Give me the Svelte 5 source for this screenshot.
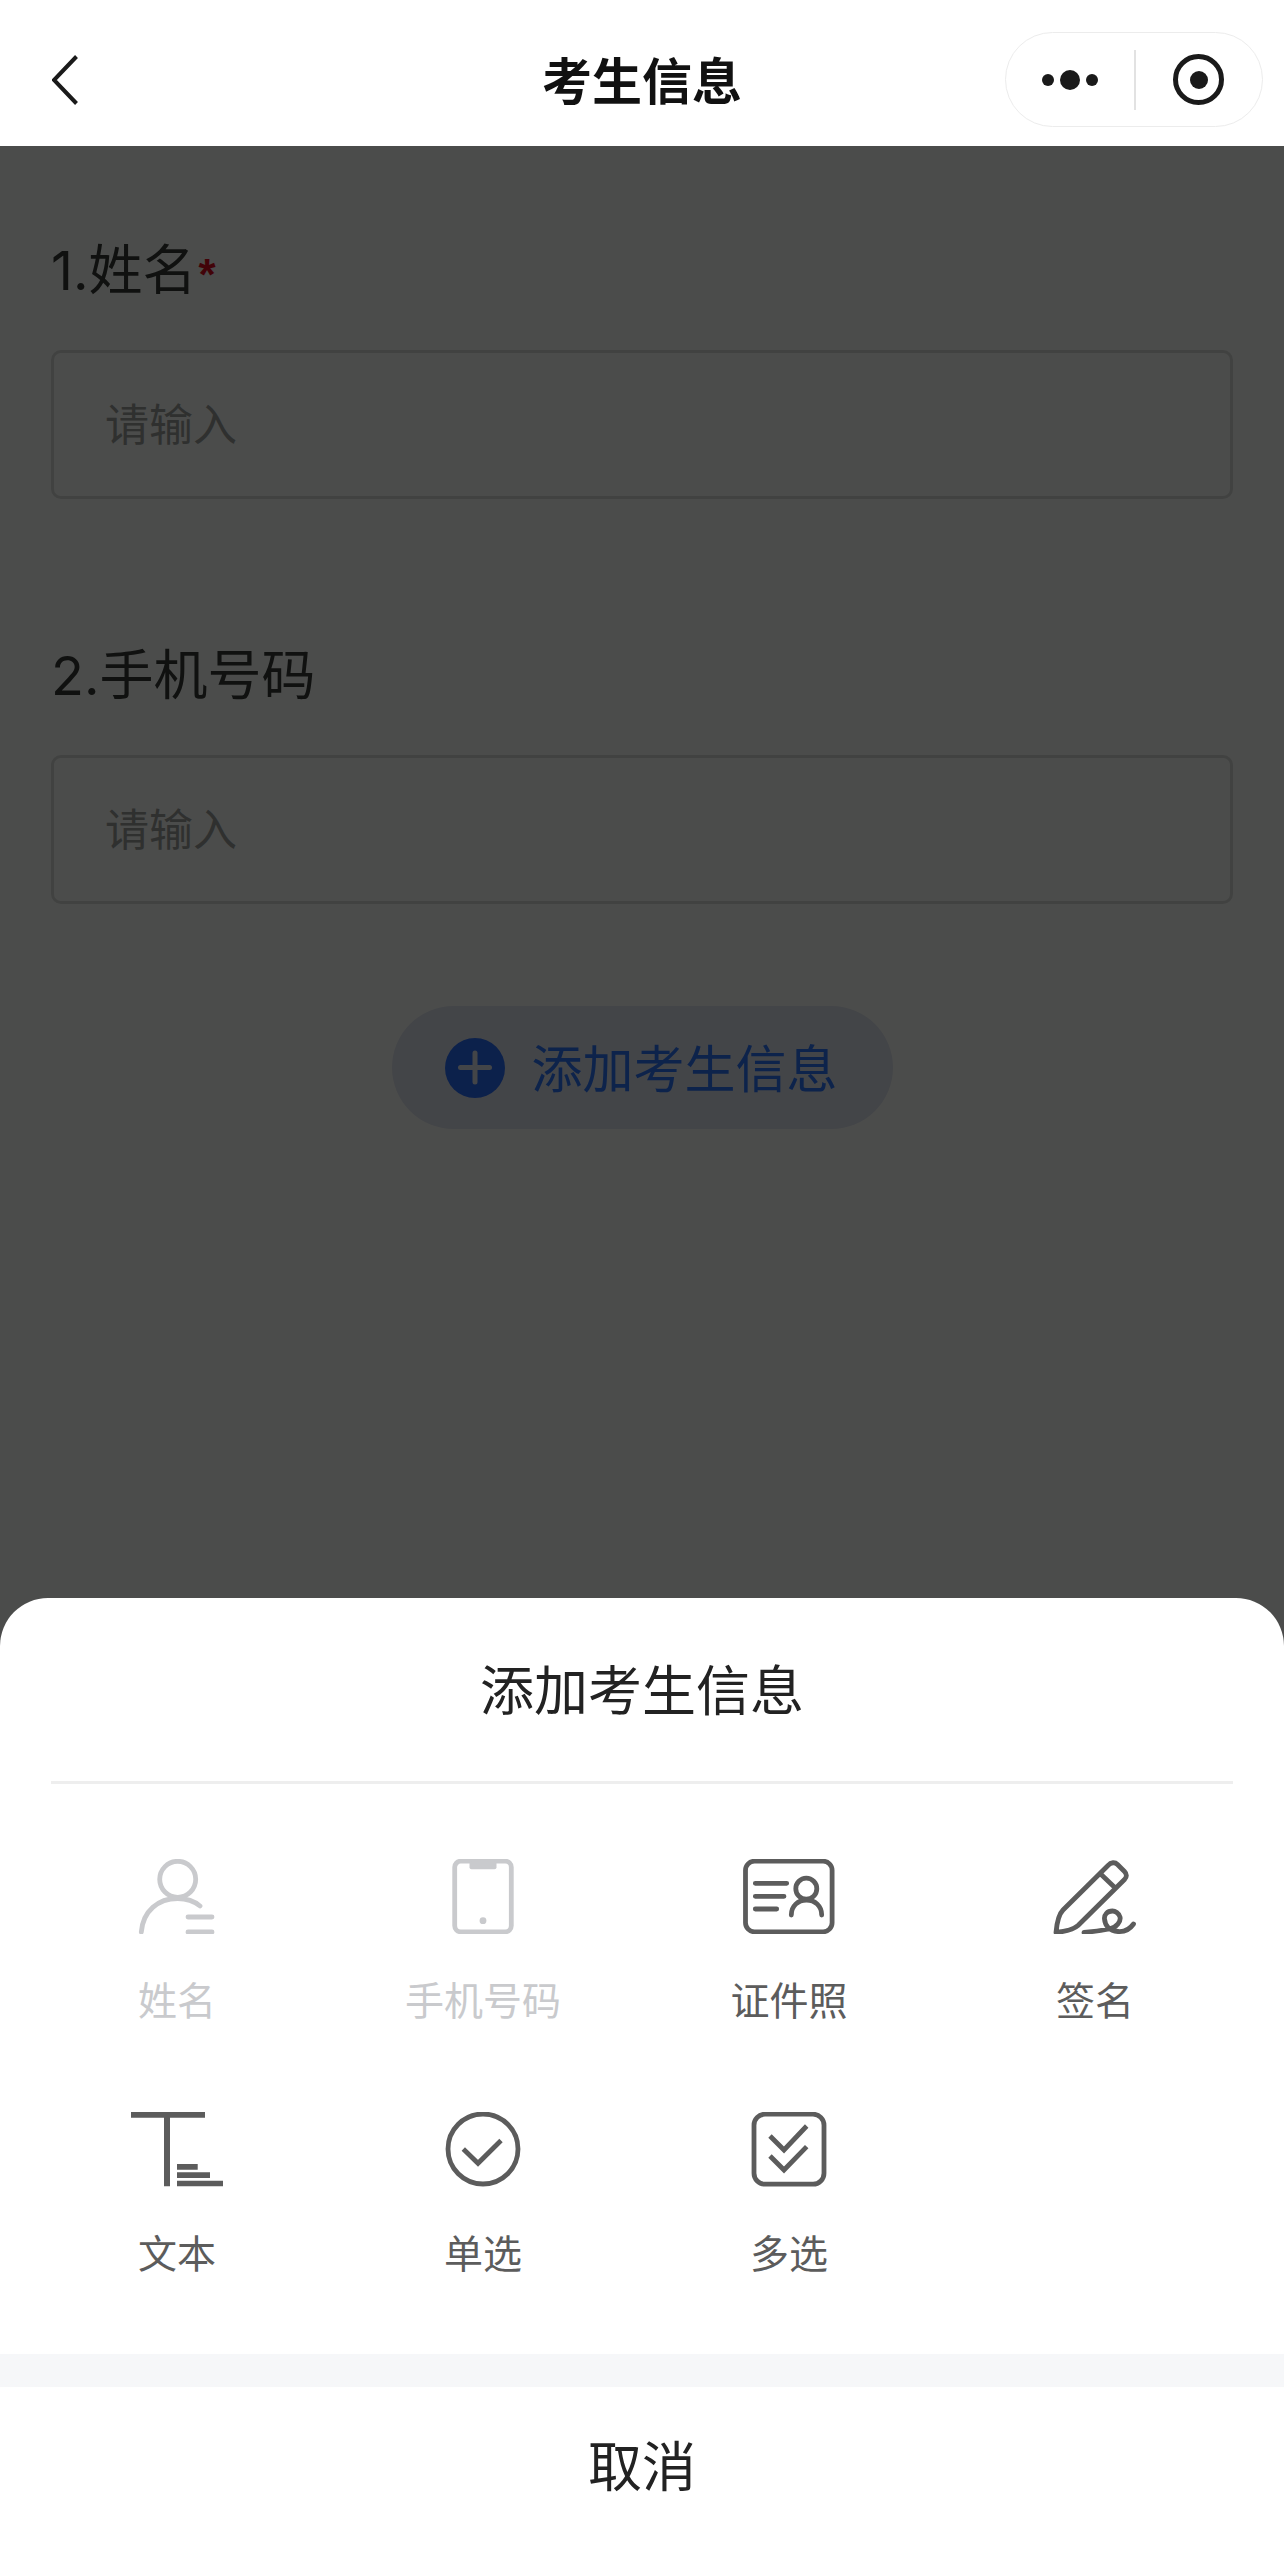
<script lang="ts">
  type Option = { id: string; label: string; disabled?: boolean };

  const fields = [
    { id: 'name', label: '1.姓名', required: true },
    { id: 'phone', label: '2.手机号码', required: false },
  ];

  const options: Option[] = [
    { id: 'name', label: '姓名', disabled: true },
    { id: 'phone', label: '手机号码', disabled: true },
    { id: 'idphoto', label: '证件照' },
    { id: 'sign', label: '签名' },
    { id: 'text', label: '文本' },
    { id: 'radio', label: '单选' },
    { id: 'check', label: '多选' },
  ];
</script>

<div class="page">
  <header class="nav">
    <button class="back" aria-label="返回">
      <svg width="26" height="50" viewBox="0 0 26 50"><path d="M24.5 1.5 2 25l22.5 23.500" /></svg>
    </button>
    <h1>考生信息</h1>
    <div class="capsule">
      <div class="more">
        <i class="dot"></i><i class="dot big"></i><i class="dot"></i>
      </div>
      <span class="sep"></span>
      <div class="target"><i></i></div>
    </div>
  </header>

  <main class="form">
    {#each fields as f}
      <section class="field">
        <div class="label">{f.label}{#if f.required}<span class="req">*</span>{/if}</div>
        <div class="input">请输入</div>
      </section>
    {/each}
    <button class="add">
      <span class="plus"></span>
      <span class="add-text">添加考生信息</span>
    </button>
  </main>

  <div class="mask"></div>

  <div class="sheet">
    <div class="sheet-title">添加考生信息</div>
    <div class="rule"></div>
    <div class="grid">
      {#each options as o}
        <div class="opt" class:disabled={o.disabled}>
          <svg class="ico" width="92" height="75" viewBox="0 0 92 75">
            {#if o.id === 'name'}
              <circle cx="46.700" cy="20.300" r="18" />
              <path d="M10.300 73C12 52 27 39.500 46.700 39.500c8.300 0 16.300 2.500 22.300 7.500M57 58h24M57 73h24" />
            {:else if o.id === 'phone'}
              <rect x="17.700" y="2.200" width="56.600" height="70.600" rx="6" />
              <rect class="fill" x="32.500" y="2" width="27" height="8.300" rx="2" />
              <circle class="fill" cx="46" cy="61.700" r="3.400" />
            {:else if o.id === 'idphoto'}
              <rect x="2.500" y="2.200" width="86.600" height="70.600" rx="9" />
              <path d="M12.300 24.300h31.400M12.300 37.300H41M12.300 50h21.400" />
              <circle cx="63.300" cy="29.700" r="10.500" />
              <path d="M48.300 56c0-9 6.700-15 15.200-15s15.200 6 15.200 15" />
            {:else if o.id === 'sign'}
              <path d="M7 73.500C8 62 10 55 14 51L59 6.500c3-3.500 7-3.500 9.500-1l7 7c2.500 2.500 2.500 5.500 0 8L29 66.500C24 71 16 72.500 7 73.500ZM52.700 16 65 27.700" />
              <path d="M35 73.500c10-1 17-2 25-3.500 8-1.500 12-8 11-12-1-4-5-6-7.500-6-5.500 0-8.500 4-8 8 .5 6 4.500 12 13.500 12.500 6 .5 12-2.500 15.500-7.500" />
            {:else if o.id === 'text'}
              <path class="fill" d="M0 0h74v5.700H0zM33 5h6v69.300h-6zM46 52h20.700v5.700H46zM46 60.300h33V66H46zM46 68.700h46v5.600H46z" />
            {:else if o.id === 'radio'}
              <circle cx="46" cy="37" r="35" />
              <path class="sharp" d="M26.300 37 41 51.300 64 28.500" />
            {:else}
              <rect x="11" y="2.200" width="70" height="70" rx="11" />
              <path class="sharp" d="m27 24 14 14 22.700-24M27 44l14 14 22.700-23.300" />
            {/if}
          </svg>
          <span>{o.label}</span>
        </div>
      {/each}
    </div>
    <div class="band"></div>
    <div class="cancel">取消</div>
  </div>
</div>

<style>
  :global(body) {
    margin: 0;
    background: #fff;
  }
  .page {
    position: relative;
    height: 2549px;
    overflow: hidden;
    font-family: Inter, "Noto Sans CJK SC", sans-serif;
    color: #393939;
  }
  button {
    border: 0;
    background: none;
    padding: 0;
    font: inherit;
    color: inherit;
  }

  .nav {
    position: relative;
    z-index: 2;
    box-sizing: border-box;
    height: 146px;
    padding: 13px 21px 0;
    display: grid;
    grid-template-columns: 1fr auto 1fr;
    align-items: center;
    background: #fff;
  }
  .back {
    display: flex;
    justify-self: start;
    margin-left: 31px;
  }
  .back svg path {
    fill: none;
    stroke: #1a1a1a;
    stroke-width: 4;
  }
  h1 {
    margin: 0 0 3px;
    font-size: 50px;
    font-weight: 700;
    color: #111;
  }
  .capsule {
    justify-self: end;
    box-sizing: border-box;
    width: 258px;
    height: 95px;
    border: 1.500px solid #ececec;
    border-radius: 48px;
    display: flex;
    align-items: center;
  }
  .more {
    width: 128px;
    display: flex;
    align-items: center;
    justify-content: center;
    gap: 6px;
  }
  .dot {
    width: 12px;
    height: 12px;
    border-radius: 50%;
    background: #1a1a1a;
  }
  .dot.big {
    width: 20px;
    height: 20px;
  }
  .sep {
    width: 1.500px;
    height: 60px;
    background: #e2e2e2;
  }
  .target {
    flex: 1;
    display: flex;
    justify-content: center;
  }
  .target i {
    box-sizing: border-box;
    width: 51px;
    height: 51px;
    border: 5.500px solid #1a1a1a;
    border-radius: 50%;
    display: flex;
    align-items: center;
    justify-content: center;
  }
  .target i::before {
    content: '';
    width: 18px;
    height: 18px;
    border-radius: 50%;
    background: #1a1a1a;
  }

  .form {
    padding: 90px 51px 0;
    display: flex;
    flex-direction: column;
  }
  .field {
    margin-bottom: 142px;
  }
  .field:last-of-type {
    margin-bottom: 102px;
  }
  .label {
    font-size: 54px;
    line-height: 70px;
    margin-bottom: 44px;
  }
  .req {
    margin-left: 2px;
    font-family: "Liberation Sans", sans-serif;
    font-size: 44px;
    font-weight: 700;
    line-height: 0;
    color: #e00a20;
  }
  .input {
    box-sizing: border-box;
    height: 149px;
    padding-left: 51px;
    border: 3px solid #dedede;
    border-radius: 10px;
    font-size: 44px;
    line-height: 145px;
    color: #a0a0a0;
  }
  .add {
    align-self: center;
    box-sizing: border-box;
    width: 501px;
    height: 123px;
    padding-left: 53px;
    border-radius: 62px;
    background: #e4e6f3;
    display: flex;
    align-items: center;
    gap: 27px;
    font-size: 51px;
    color: #2f75ff;
  }
  .add-text {
    padding-bottom: 3px;
  }
  .plus {
    position: relative;
    width: 60px;
    height: 60px;
    border-radius: 50%;
    background: #2a6cff;
  }
  .plus::before,
  .plus::after {
    content: '';
    position: absolute;
    left: 13px;
    top: 27.500px;
    width: 34px;
    height: 5px;
    border-radius: 3px;
    background: #e4e6f3;
  }
  .plus::after {
    transform: rotate(90deg);
  }

  .mask {
    position: absolute;
    inset: 146px 0 0;
    background: rgba(0, 2, 0, 0.705);
  }

  .sheet {
    position: absolute;
    left: 0;
    right: 0;
    bottom: 0;
    background: #fff;
    border-radius: 48px 48px 0 0;
    color: #222;
  }
  .sheet-title {
    height: 183px;
    font-size: 54px;
    line-height: 187px;
    text-align: center;
  }
  .rule {
    height: 3px;
    margin: 0 51px;
    background: #eee;
  }
  .grid {
    padding: 75px 24px 75px;
    display: grid;
    grid-template-columns: repeat(4, 306px);
    row-gap: 86px;
  }
  .opt {
    display: flex;
    flex-direction: column;
    align-items: center;
    gap: 42px;
    font-size: 39px;
    line-height: 50px;
    color: #5c5c5c;
  }
  .opt.disabled {
    color: #c9cacd;
  }
  .ico {
    display: block;
    fill: none;
    stroke: currentColor;
    stroke-width: 4.800;
    stroke-linecap: round;
    stroke-linejoin: round;
  }
  .ico .fill {
    fill: currentColor;
    stroke: none;
  }
  .ico .sharp {
    stroke-linecap: butt;
    stroke-linejoin: miter;
  }
  .band {
    height: 33px;
    background: #f6f7f9;
  }
  .cancel {
    height: 162px;
    font-size: 54px;
    line-height: 162px;
    text-align: center;
  }
</style>
